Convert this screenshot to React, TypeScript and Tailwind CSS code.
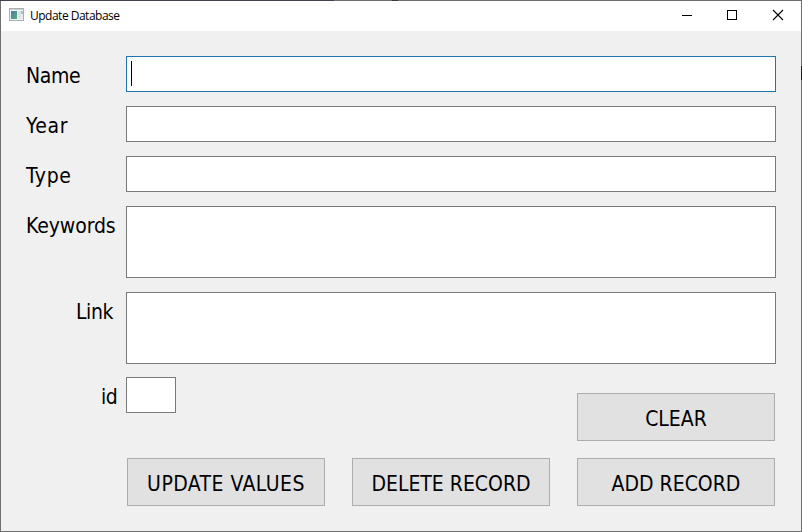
import React from "react";

const formFont = "font-['DejaVu_Sans_Condensed','DejaVu_Sans',sans-serif] [font-stretch:condensed] text-[21px] leading-[30px] text-black whitespace-nowrap";

type FieldProps = {
  label: string;
  labelClass: string;
  boxClass: string;
  children?: React.ReactNode;
};

function Field({ label, labelClass, boxClass, children }: FieldProps) {
  return (
    <div className="flex items-start">
      <div className="flex w-[100px] shrink-0">
        <label className={`shrink-0 pt-[5px] ${formFont} ${labelClass}`}>{label}</label>
      </div>
      <div className={`border bg-white ${boxClass}`}>{children}</div>
    </div>
  );
}

function PushButton({ text, textClass }: { text: string; textClass: string }) {
  return (
    <button className="flex h-[48px] w-[198px] items-start justify-center border border-[#adadad] bg-[#e1e1e1] pt-[10px]">
      <span className={`${formFont} ${textClass}`}>{text}</span>
    </button>
  );
}

function AppIcon() {
  return (
    <svg width="16" height="14" viewBox="0 0 16 14" shapeRendering="crispEdges">
      <defs>
        <linearGradient id="pane" x1="0" y1="0" x2="1" y2="1">
          <stop offset="0" stopColor="#4a7fa0" />
          <stop offset="1" stopColor="#5aa883" />
        </linearGradient>
      </defs>
      <rect x="0" y="0" width="15" height="13" fill="#a9b0b5" />
      <rect x="1" y="1" width="13" height="1" fill="#c9d0d6" />
      <rect x="1" y="2" width="13" height="10" fill="#f1f3f4" />
      <rect x="2" y="3" width="6" height="8" fill="url(#pane)" />
      <rect x="9" y="3" width="3" height="8" fill="#dfe3e6" />
      <rect x="12" y="3" width="2" height="3" fill="#a5c4bc" />
      <rect x="12" y="6" width="2" height="5" fill="#e8ecee" />
    </svg>
  );
}

export default function App() {
  return (
    <div className="flex h-[532px] w-[802px] flex-col overflow-hidden bg-[#f0f0f0] font-['Noto_Sans','Open_Sans',sans-serif]">
      <div className="flex h-px shrink-0 bg-[#6e6e6e]">
        <div className="w-[334px] bg-[#40424f]" />
        <div className="ml-[58px] w-[6px] bg-[#3c3838]" />
      </div>
      <div className="flex min-h-0 flex-1 border-b border-l border-[#6e6e6e]">
        <div className="flex w-[800px] shrink-0 flex-col">
          <header className="flex h-[30px] shrink-0 items-start bg-white pl-[8px]">
            <div className="pt-[7px]">
              <AppIcon />
            </div>
            <h1 className="ml-[5px] pt-[6px] font-['Open_Sans','Noto_Sans',sans-serif] text-[12px] leading-[18px] tracking-[-0.5px] text-black">Update Database</h1>
            <svg className="ml-auto mr-[17px] mt-[8px]" width="102" height="12" viewBox="0 0 102 12" fill="none" stroke="#000">
              <path d="M0 6.5H10" shapeRendering="crispEdges" />
              <rect x="45.5" y="1.5" width="9" height="9" shapeRendering="crispEdges" />
              <path d="M91 1L101 11M101 1L91 11" strokeWidth="1.1" />
            </svg>
          </header>
          <main className="flex flex-col pl-[25px] pt-[25px]">
            <div className="flex flex-col gap-[14px]">
              <Field label="Name" labelClass="tracking-[-0.4px]" boxClass="h-[36px] w-[650px] border-[#1f75b0] pl-[4px] pt-[4px]">
                <div className="h-[25px] w-px bg-black" />
              </Field>
              <Field label="Year" labelClass="tracking-[0.6px]" boxClass="h-[36px] w-[650px] border-[#7a7a7a]" />
              <Field label="Type" labelClass="tracking-[0.6px]" boxClass="h-[36px] w-[650px] border-[#7a7a7a]" />
              <Field label="Keywords" labelClass="tracking-[-0.1px]" boxClass="h-[72px] w-[650px] border-[#7a7a7a]" />
              <Field label="Link" labelClass="pl-[50px] tracking-[-0.4px]" boxClass="h-[72px] w-[650px] border-[#7a7a7a]" />
            </div>
            <div className="mt-[13px] flex h-[64px] items-start">
              <Field label="id" labelClass="pl-[75px] tracking-[-0.4px]" boxClass="h-[36px] w-[50px] border-[#7a7a7a]" />
              <div className="ml-auto mr-[26px] pt-[16px]">
                <PushButton text="CLEAR" textClass="" />
              </div>
            </div>
            <div className="ml-[101px] mt-[17px] flex gap-[27px]">
              <PushButton text="UPDATE VALUES" textClass="tracking-[0.45px]" />
              <PushButton text="DELETE RECORD" textClass="" />
              <PushButton text="ADD RECORD" textClass="" />
            </div>
          </main>
        </div>
        <div className="flex w-px flex-col bg-[#6e6e6e]">
          <div className="mt-[65px] h-[14px] bg-[#1c1c1c]" />
        </div>
      </div>
    </div>
  );
}
